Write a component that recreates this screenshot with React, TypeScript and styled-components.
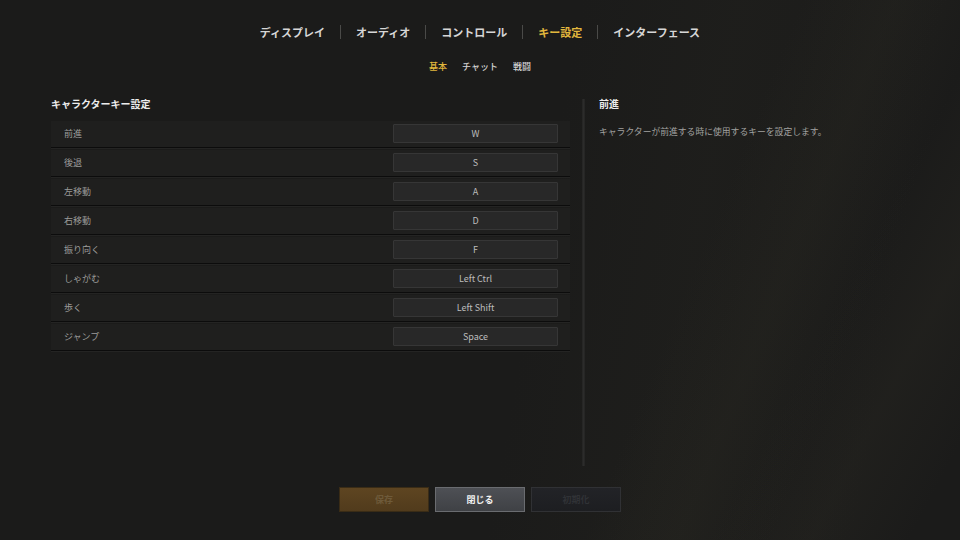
import React, { useState } from "react";
import styled, { createGlobalStyle } from "styled-components";

const GlobalStyle = createGlobalStyle`
  html, body {
    margin: 0;
    padding: 0;
    background: #1b1b1a;
  }
  * {
    box-sizing: border-box;
  }
`;

const TABS = ["ディスプレイ", "オーディオ", "コントロール", "キー設定", "インターフェース"];
const SUB_TABS = ["基本", "チャット", "戦闘"];

const KEYS = [
  { label: "前進", key: "W" },
  { label: "後退", key: "S" },
  { label: "左移動", key: "A" },
  { label: "右移動", key: "D" },
  { label: "振り向く", key: "F" },
  { label: "しゃがむ", key: "Left Ctrl" },
  { label: "歩く", key: "Left Shift" },
  { label: "ジャンプ", key: "Space" },
];

const App: React.FC = () => {
  const [tab] = useState(3);
  const [subTab] = useState(0);
  const [selected] = useState(0);

  return (
    <Screen>
      <GlobalStyle />
      <TabBar>
        {TABS.map((t, i) => (
          <React.Fragment key={t}>
            {i > 0 && <TabSep />}
            <Tab active={i === tab}>{t}</Tab>
          </React.Fragment>
        ))}
      </TabBar>

      <SubTabBar>
        {SUB_TABS.map((t, i) => (
          <SubTab key={t} active={i === subTab}>
            {t}
          </SubTab>
        ))}
      </SubTabBar>

      <Main>
        <KeyList>
          <SectionTitle>キャラクターキー設定</SectionTitle>
          {KEYS.map((k) => (
            <KeyRow key={k.label}>
              <KeyLabel>{k.label}</KeyLabel>
              <KeyBox>{k.key}</KeyBox>
            </KeyRow>
          ))}
        </KeyList>

        <Divider />

        <Detail>
          <SectionTitle>{KEYS[selected].label}</SectionTitle>
          <DetailText>キャラクターが前進する時に使用するキーを設定します。</DetailText>
        </Detail>
      </Main>

      <Footer>
        <Button variant="save">保存</Button>
        <Button variant="close">閉じる</Button>
        <Button variant="reset">初期化</Button>
      </Footer>
    </Screen>
  );
};

const Screen = styled.div`
  width: 960px;
  height: 540px;
  overflow: hidden;
  display: flex;
  flex-direction: column;
  align-items: center;
  padding-top: 24px;
  font-family: "Noto Sans CJK JP", "Noto Sans", sans-serif;
  background:
    linear-gradient(112deg, transparent 68%, rgba(60, 58, 44, 0.14) 76%, transparent 84%),
    linear-gradient(118deg, transparent 80%, rgba(70, 66, 50, 0.12) 88%, transparent 96%),
    linear-gradient(100deg, transparent 55%, rgba(45, 44, 36, 0.16) 70%, transparent 90%),
    #1b1b1a;
`;

const TabBar = styled.nav`
  display: flex;
  align-items: center;
  gap: 15px;
  height: 16px;
`;

const Tab = styled.div<{ active?: boolean }>`
  font-size: 11px;
  font-weight: 700;
  line-height: 16px;
  color: ${(p) => (p.active ? "#e2b73d" : "#d6d6d6")};
`;

const TabSep = styled.span`
  width: 1px;
  height: 14px;
  background: #4a4a48;
`;

const SubTabBar = styled.div`
  display: flex;
  gap: 15px;
  margin-top: 21px;
  height: 12px;
`;

const SubTab = styled.div<{ active?: boolean }>`
  font-size: 9px;
  font-weight: 500;
  line-height: 12px;
  color: ${(p) => (p.active ? "#e2b73d" : "#d4d4d4")};
`;

const Main = styled.main`
  align-self: stretch;
  display: flex;
  align-items: flex-start;
  height: 370px;
  margin-top: 24px;
  padding-left: 51px;
`;

const KeyList = styled.section`
  width: 519px;
  display: flex;
  flex-direction: column;
`;

const SectionTitle = styled.h2`
  margin: 0 0 10px;
  font-size: 10px;
  font-weight: 700;
  line-height: 14px;
  color: #ececec;
`;

const KeyRow = styled.div`
  display: flex;
  align-items: center;
  justify-content: space-between;
  height: 27px;
  margin-bottom: 2px;
  padding: 0 12px 1px 13px;
  background: #1f1f1e;
  border-bottom: 1px solid #0c0c0c;
  box-shadow: 0 1px 0 #242423;
`;

const KeyLabel = styled.span`
  font-size: 9px;
  color: #9c9c9a;
`;

const KeyBox = styled.div`
  width: 165px;
  height: 19px;
  display: flex;
  align-items: center;
  justify-content: center;
  font-size: 9px;
  font-weight: 400;
  color: #bdbdbd;
  background: #282828;
  border: 1px solid #363636;
  border-radius: 1px;
`;

const Divider = styled.div`
  width: 3px;
  height: 367px;
  margin: 2px 14px 0 12px;
  background: linear-gradient(90deg, #232322, #2c2c2b, #232322);
`;

const Detail = styled.section`
  display: flex;
  flex-direction: column;
`;

const DetailText = styled.p`
  margin: 4px 0 0;
  font-size: 8.8px;
  line-height: 14px;
  color: #a2a2a0;
`;

const BUTTON_STYLES = {
  save: `
    background: linear-gradient(180deg, #5e4521, #513b1c);
    border: 1px solid #3a2c16;
    color: #6e5a3a;
  `,
  close: `
    background: linear-gradient(180deg, #4e5055, #3f4145);
    border: 1px solid #6a6c70;
    color: #f2f2f2;
  `,
  reset: `
    background: linear-gradient(180deg, #222327, #1d1e21);
    border: 1px solid #303134;
    color: #303236;
  `,
};

const Footer = styled.footer`
  display: flex;
  gap: 6px;
  margin-top: 20px;
`;

const Button = styled.button<{ variant: keyof typeof BUTTON_STYLES }>`
  width: 90px;
  height: 25px;
  padding: 0;
  font-family: inherit;
  font-size: 9px;
  font-weight: 700;
  border-radius: 0;
  cursor: pointer;
  ${(p) => BUTTON_STYLES[p.variant]}
`;

export default App;
